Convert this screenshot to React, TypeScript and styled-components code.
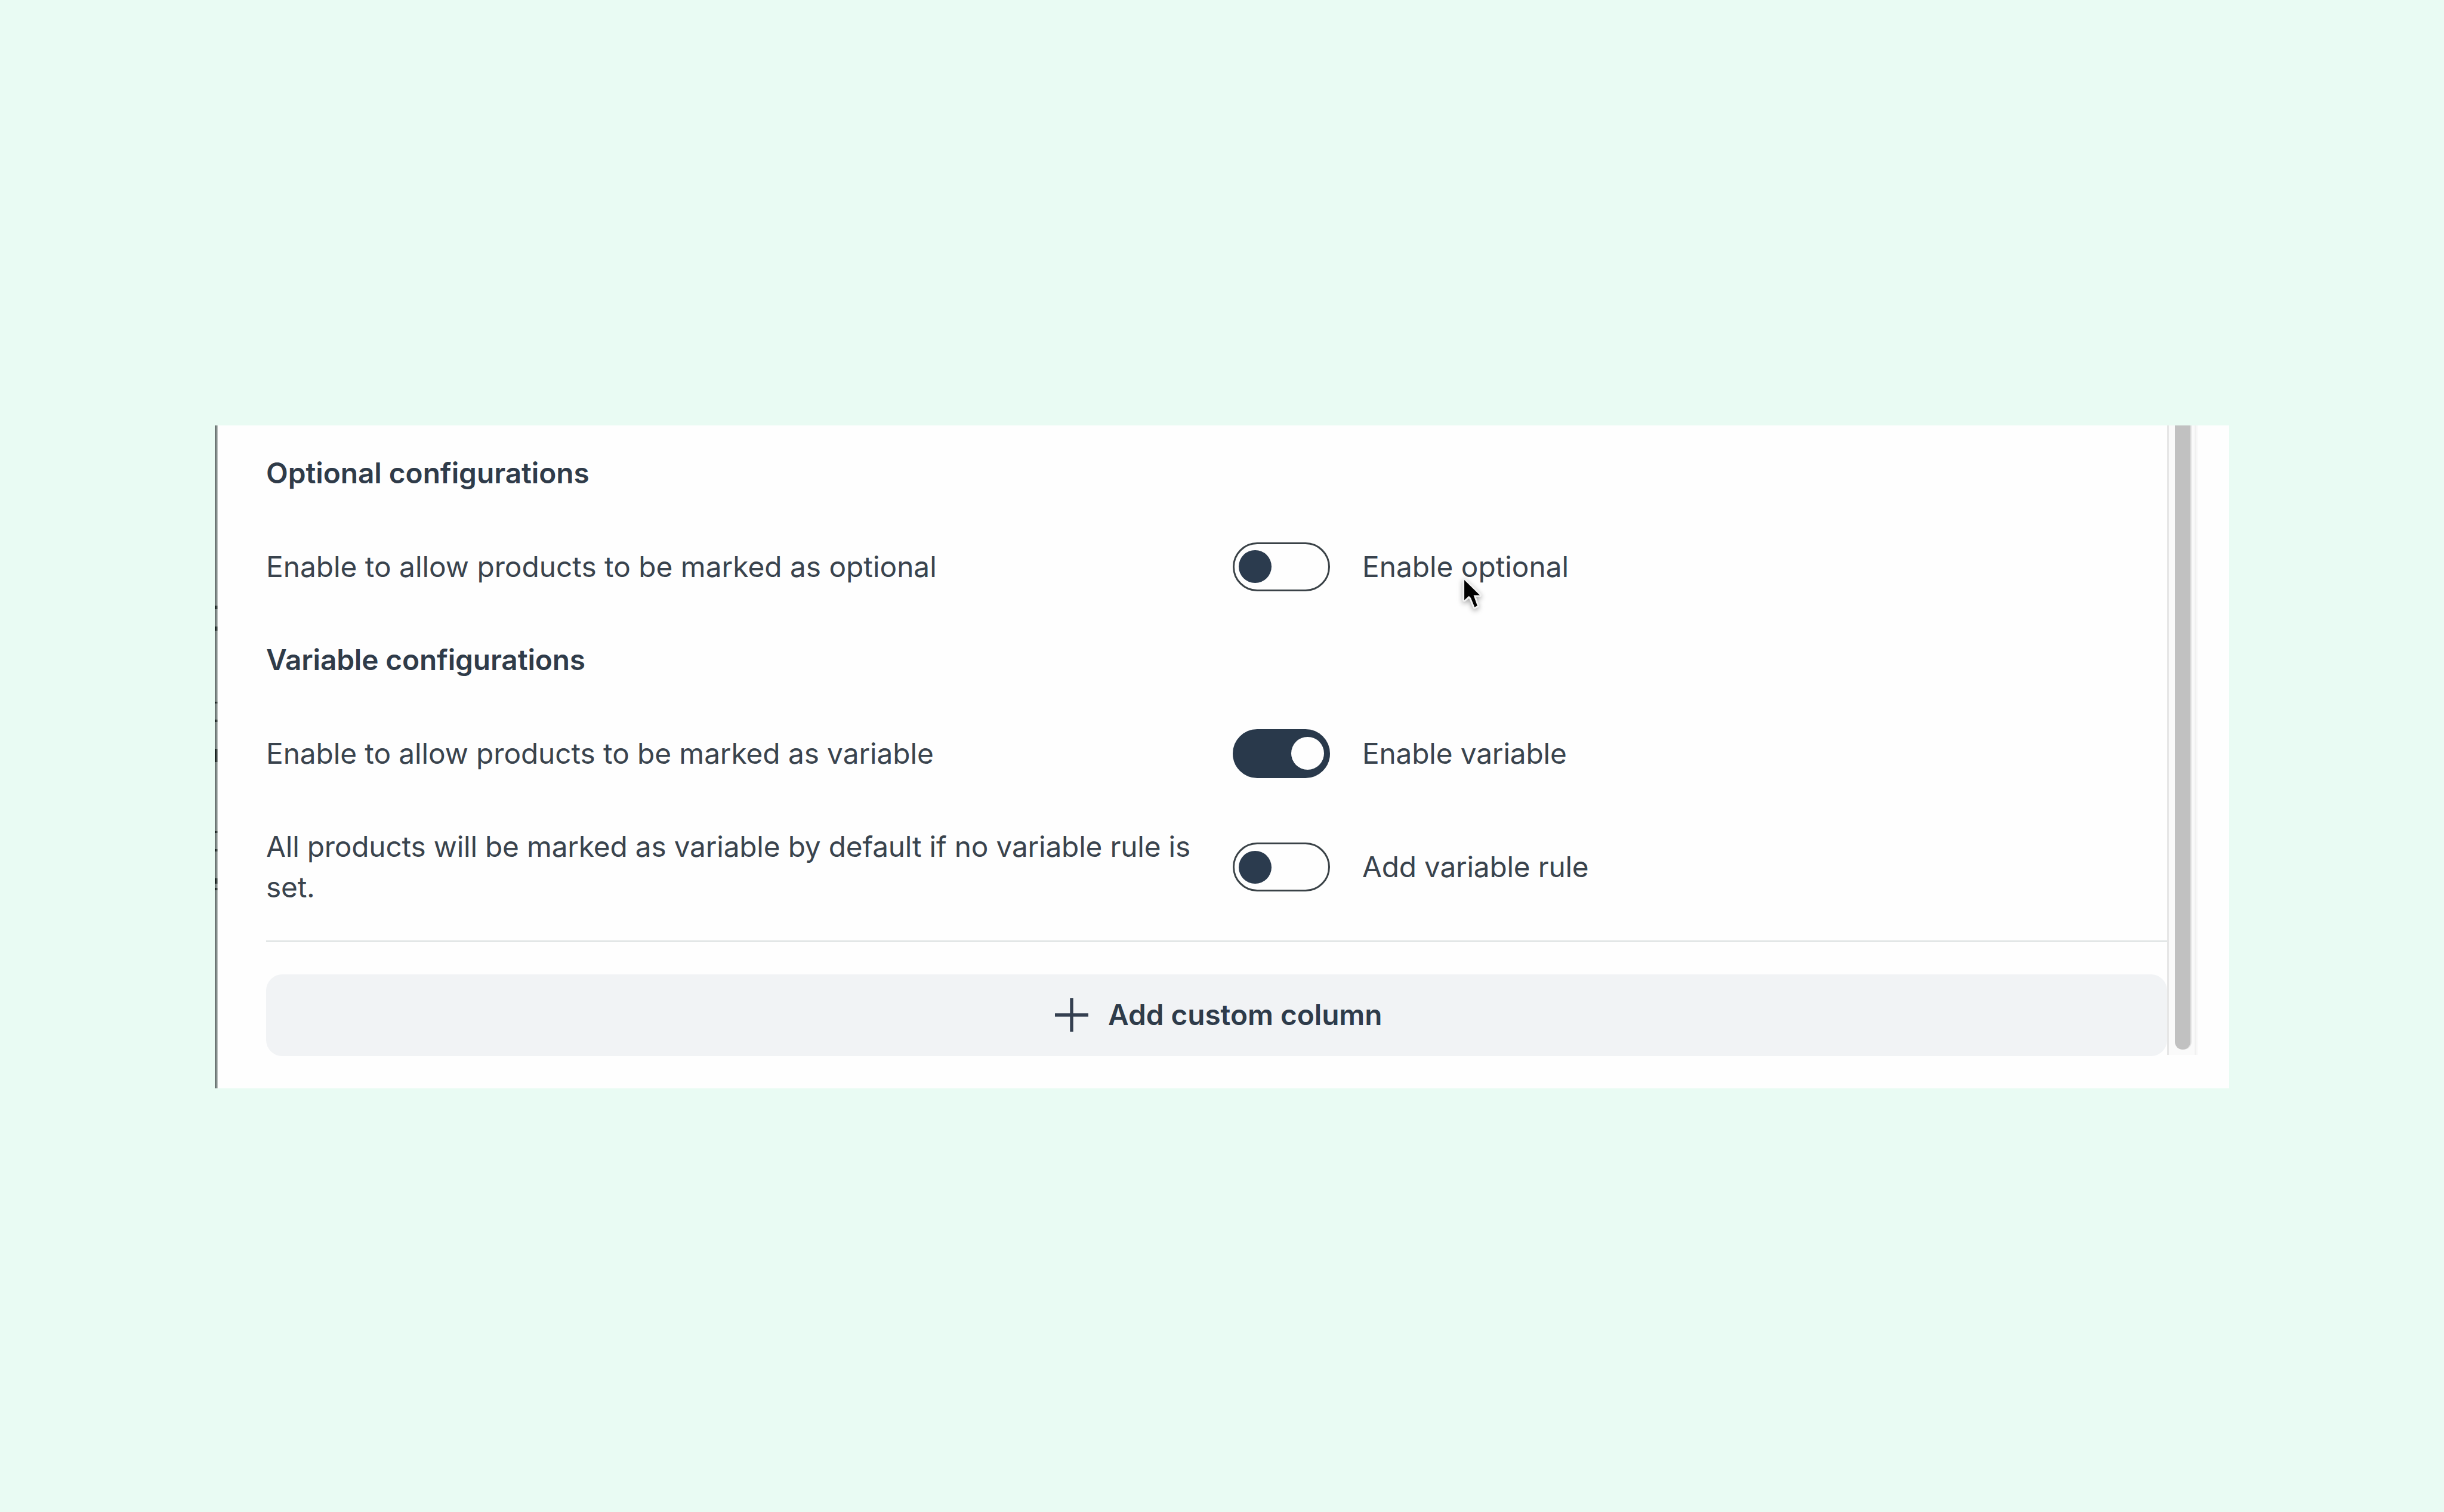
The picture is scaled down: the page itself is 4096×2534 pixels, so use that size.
import styled, { createGlobalStyle } from 'styled-components';
import { Fragment } from 'react';

const GlobalStyle = createGlobalStyle`
	*, *::before, *::after {
		box-sizing: border-box;
	}
	body {
		margin: 0;
		background: #e9fbf3;
		font-family: Inter, 'Liberation Sans', sans-serif;
	}
`;

const Page = styled.main`
	height: 2534px;
	padding: 713px 360px 710px;
	overflow: hidden;
	background: #e9fbf3;
`;

const Card = styled.section`
	position: relative;
	display: flex;
	height: 1111px;
	background: #fefefe;
`;

const Edge = styled.div`
	position: relative;
	flex: none;
	width: 5px;
	background: linear-gradient(to right, #6b7573 3px, #bbc1bf 3px);
`;

const EdgeMark = styled.span<{ $top: number; $height: number }>`
	position: absolute;
	top: ${({ $top }) => $top}px;
	left: 0;
	width: 5px;
	height: ${({ $height }) => $height}px;
	background: linear-gradient(to right, #18211f 3px, #8f9694 3px);
`;

const Content = styled.div`
	display: flex;
	flex-direction: column;
	flex: none;
	gap: 81.2px;
	width: 3267px;
	padding: 46.4px 0 0 81px;
`;

const Heading = styled.h2<{ $tracking?: number }>`
	margin: 0;
	color: #2f3b49;
	font-size: 47.75px;
	font-weight: 600;
	line-height: 68.4px;
	letter-spacing: ${({ $tracking = 0 }) => $tracking}px;
`;

const Row = styled.div`
	display: grid;
	grid-template-columns: 1566px auto 1fr;
	column-gap: 54px;
	align-items: center;
	min-height: 82px;
`;

const Text = styled.span<{ $tracking?: number }>`
	color: #39434d;
	font-size: 47.75px;
	line-height: 68.4px;
	letter-spacing: ${({ $tracking = 0 }) => $tracking}px;
`;

const Switch = styled.button<{ $on: boolean }>`
	display: flex;
	align-items: center;
	justify-content: ${({ $on }) => ($on ? 'flex-end' : 'flex-start')};
	width: 163px;
	height: 82px;
	padding: 0 7px;
	border: 3px solid ${({ $on }) => ($on ? '#29394b' : '#3a4247')};
	border-radius: 41px;
	background: ${({ $on }) => ($on ? '#29394b' : '#fefefe')};
`;

const Knob = styled.span<{ $on: boolean }>`
	width: 55px;
	height: 55px;
	border-radius: 50%;
	background: ${({ $on }) => ($on ? '#fefefe' : '#2b3b4e')};
`;

const Footer = styled.div`
	display: flex;
	flex-direction: column;
	gap: 54px;
	margin-top: -27px;
`;

const Divider = styled.hr`
	width: 100%;
	height: 3px;
	margin: 0;
	border: none;
	background: #e2e6e6;
`;

const AddButton = styled.button`
	display: flex;
	align-items: center;
	justify-content: center;
	gap: 33.5px;
	height: 137px;
	padding: 0 0 0 6px;
	border: none;
	border-radius: 27px;
	background: #f1f3f5;
	color: #2e3b4a;
	font-family: inherit;
	font-size: 47.75px;
	font-weight: 600;
	line-height: 68.4px;
	letter-spacing: -0.05px;
`;

const Track = styled.div`
	display: flex;
	flex: none;
	width: 52px;
	height: 1055px;
	padding-left: 10px;
	border-left: 3px solid #e6e6e6;
	background: linear-gradient(
		to right,
		#fafafa 43px,
		#f1f1f1 43px,
		#f1f1f1 46px,
		#fafafa 46px
	);
`;

const Thumb = styled.div`
	width: 26px;
	height: 1046px;
	border-radius: 0 0 13px 13px;
	background: #c1c1c1;
	box-shadow: 2px 0 0 #e4e4e4;
`;

const Pointer = styled.svg`
	position: absolute;
	top: 242.7px;
	left: 2070.3px;
	overflow: visible;
	filter: drop-shadow(0 3px 4px rgba(0, 0, 0, 0.35));
`;

type SettingType = {
	text: string;
	label: string;
	on?: boolean;
	tracking?: number;
	labelTracking?: number;
};

type GroupType = {
	title: string;
	tracking?: number;
	settings: SettingType[];
};

const groups: GroupType[] = [
	{
		title: 'Optional configurations',
		tracking: -0.03,
		settings: [
			{
				text: 'Enable to allow products to be marked as optional',
				label: 'Enable optional',
				tracking: 0.01,
			},
		],
	},
	{
		title: 'Variable configurations',
		tracking: -0.12,
		settings: [
			{
				text: 'Enable to allow products to be marked as variable',
				label: 'Enable variable',
				on: true,
				tracking: -0.07,
				labelTracking: -0.15,
			},
			{
				text: 'All products will be marked as variable by default if no variable rule is set.',
				label: 'Add variable rule',
				tracking: -0.18,
				labelTracking: -0.21,
			},
		],
	},
];

// slivers of the page behind the card: [top, height]
const edgeMarks = [
	[302, 6],
	[337, 7],
	[463, 3],
	[493, 4],
	[542, 22],
	[680, 3],
	[710, 4],
	[759, 9],
	[775, 4],
];

const Setting = ({
	text,
	label,
	on = false,
	tracking,
	labelTracking,
}: SettingType) => {
	return (
		<Row>
			<Text $tracking={tracking}>{text}</Text>
			<Switch
				type="button"
				role="switch"
				aria-checked={on}
				aria-label={label}
				$on={on}
			>
				<Knob $on={on} />
			</Switch>
			<Text $tracking={labelTracking}>{label}</Text>
		</Row>
	);
};

const App = () => {
	return (
		<Page>
			<GlobalStyle />
			<Card>
				<Edge>
					{edgeMarks.map(([top, height]) => (
						<EdgeMark key={top} $top={top} $height={height} />
					))}
				</Edge>
				<Content>
					{groups.map((group) => (
						<Fragment key={group.title}>
							<Heading $tracking={group.tracking}>
								{group.title}
							</Heading>
							{group.settings.map((setting) => (
								<Setting key={setting.label} {...setting} />
							))}
						</Fragment>
					))}
					<Footer>
						<Divider />
						<AddButton type="button">
							<svg width="56" height="56" viewBox="0 0 56 56">
								<path
									d="M28 0v56M0 28h56"
									fill="none"
									stroke="#343f50"
									strokeWidth="5.4"
								/>
							</svg>
							Add custom column
						</AddButton>
					</Footer>
				</Content>
				<Track>
					<Thumb />
				</Track>
				<Pointer width="75" height="82" viewBox="0 0 330 360">
					<path
						d="M106 70V218L140 188L154 202L182 270L202 260L174 182H220Z"
						fill="#000"
						stroke="#f0f0f0"
						strokeWidth="26"
						strokeLinejoin="round"
						paintOrder="stroke"
					/>
				</Pointer>
			</Card>
		</Page>
	);
};

export default App;
